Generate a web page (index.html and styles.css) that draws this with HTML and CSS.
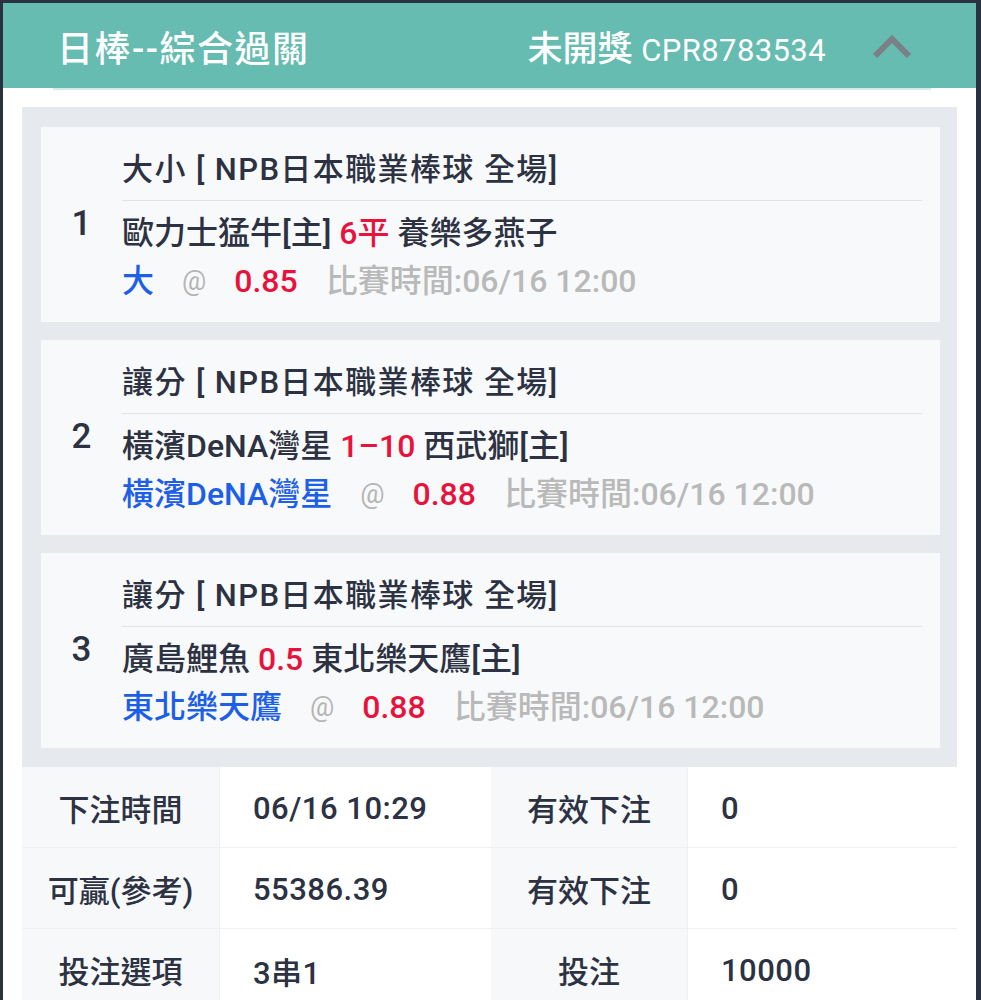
FILE: index.html
```html
<!DOCTYPE html>
<html lang="zh-Hant">
<head>
  <meta charset="UTF-8" />
  <meta name="viewport" content="width=device-width, initial-scale=1.0"/>
  <title>日棒--綜合過關</title>
  <link rel="stylesheet" href="styles.css">
</head>
<body>
  <div class="page">
    <div class="header">
      <div class="header-title">日棒--綜合過關</div>
      <div class="header-status">未開獎 <span class="order-no">CPR8783534</span></div>
      <svg class="chevron" width="40" height="24" viewBox="0 0 40 24">
        <polyline points="3,21 20,4 37,21" fill="none" stroke="#7b7f87" stroke-width="6" />
      </svg>
    </div>
    <div class="header-line"></div>

    <div class="content">
      <div class="bets">
        <div class="bet-card">
          <div class="bet-no">1</div>
          <div class="bet-body">
            <div class="bet-title">大小 [ NPB日本職業棒球 全場]</div>
            <div class="bet-teams">歐力士猛牛[主] <span class="red">6平</span> 養樂多燕子</div>
            <div class="bet-odds">
              <span class="blue">大</span>
              <span class="at">@</span>
              <span class="red">0.85</span>
              <span class="time">比賽時間:06/16 12:00</span>
            </div>
          </div>
        </div>

        <div class="bet-card">
          <div class="bet-no">2</div>
          <div class="bet-body">
            <div class="bet-title">讓分 [ NPB日本職業棒球 全場]</div>
            <div class="bet-teams">橫濱DeNA灣星 <span class="red">1–10</span> 西武獅[主]</div>
            <div class="bet-odds">
              <span class="blue">橫濱DeNA灣星</span>
              <span class="at">@</span>
              <span class="red">0.88</span>
              <span class="time">比賽時間:06/16 12:00</span>
            </div>
          </div>
        </div>

        <div class="bet-card">
          <div class="bet-no">3</div>
          <div class="bet-body">
            <div class="bet-title">讓分 [ NPB日本職業棒球 全場]</div>
            <div class="bet-teams">廣島鯉魚 <span class="red">0.5</span> 東北樂天鷹[主]</div>
            <div class="bet-odds">
              <span class="blue">東北樂天鷹</span>
              <span class="at">@</span>
              <span class="red">0.88</span>
              <span class="time">比賽時間:06/16 12:00</span>
            </div>
          </div>
        </div>
      </div>

      <div class="info-table">
        <div class="cell label">下注時間</div>
        <div class="cell value">06/16 10:29</div>
        <div class="cell label">有效下注</div>
        <div class="cell value">0</div>

        <div class="cell label">可贏(參考)</div>
        <div class="cell value">55386.39</div>
        <div class="cell label">有效下注</div>
        <div class="cell value">0</div>

        <div class="cell label">投注選項</div>
        <div class="cell value">3串1</div>
        <div class="cell label">投注</div>
        <div class="cell value">10000</div>
      </div>
    </div>
  </div>
</body>
</html>
```

FILE: styles.css
```css
body {
  margin: 0;
  background: #2a3140;
  font-family: Roboto, "Noto Sans CJK TC", sans-serif;
  font-weight: 500;
  color: #2c3242;
}
.page { margin: 3px 5px 0 3px; background: #fff; padding-bottom: 40px; }

.header {
  height: 85px;
  background: #66bcb0;
  color: #fff;
  display: flex;
  align-items: center;
  padding: 0 64px 0 54px;
}
.header-title { font-size: 36px; letter-spacing: 1.5px; flex: 1; }
.header-status { font-size: 35px; }
.order-no { font-size: 31px; letter-spacing: 0.4px; font-weight: 400; }
.chevron { margin-left: 46px; margin-top: 2px; }
.header-line { height: 2px; background: #d3ebe7; margin: 0 45px 0 50px; }

.content { padding: 0 19px; }

.bets {
  margin-top: 17px;
  background: #e6e9ee;
  padding: 20px 17px 19px 19px;
  display: flex;
  flex-direction: column;
  gap: 18px;
}
.bet-card {
  background: #f8f9fa;
  display: flex;
  align-items: center;
  padding: 19px 18px 17px 0;
}
.bet-no { width: 81px; text-align: center; font-size: 35px; margin-top: -4px; }
.bet-body { flex: 1; font-size: 32px; }
.bet-title { font-size: 31px; letter-spacing: 1.4px; line-height: 48px; padding-bottom: 6px; border-bottom: 1px solid #dfe2e6; }
.bet-teams { line-height: 48px; margin-top: 8px; }
.bet-odds { line-height: 48px; display: flex; gap: 28px; }
.red { color: #e8123c; }
.blue { color: #1d5fe6; }
.at { color: #b5b5b5; font-size: 27px; font-weight: 400; }
.time { color: #b9b9b9; }

.info-table {
  display: grid;
  grid-template-columns: 198px 271px 197px 1fr;
  grid-auto-rows: 81px;
}
.cell {
  display: flex;
  align-items: center;
  font-size: 31px;
  border-bottom: 1px solid #eef0f3;
}
.label { background: #f7f8fa; justify-content: center; border-right: 1px solid #eef0f3; }
.value { padding: 3px 0 0 33px; letter-spacing: 0.5px; }
```
